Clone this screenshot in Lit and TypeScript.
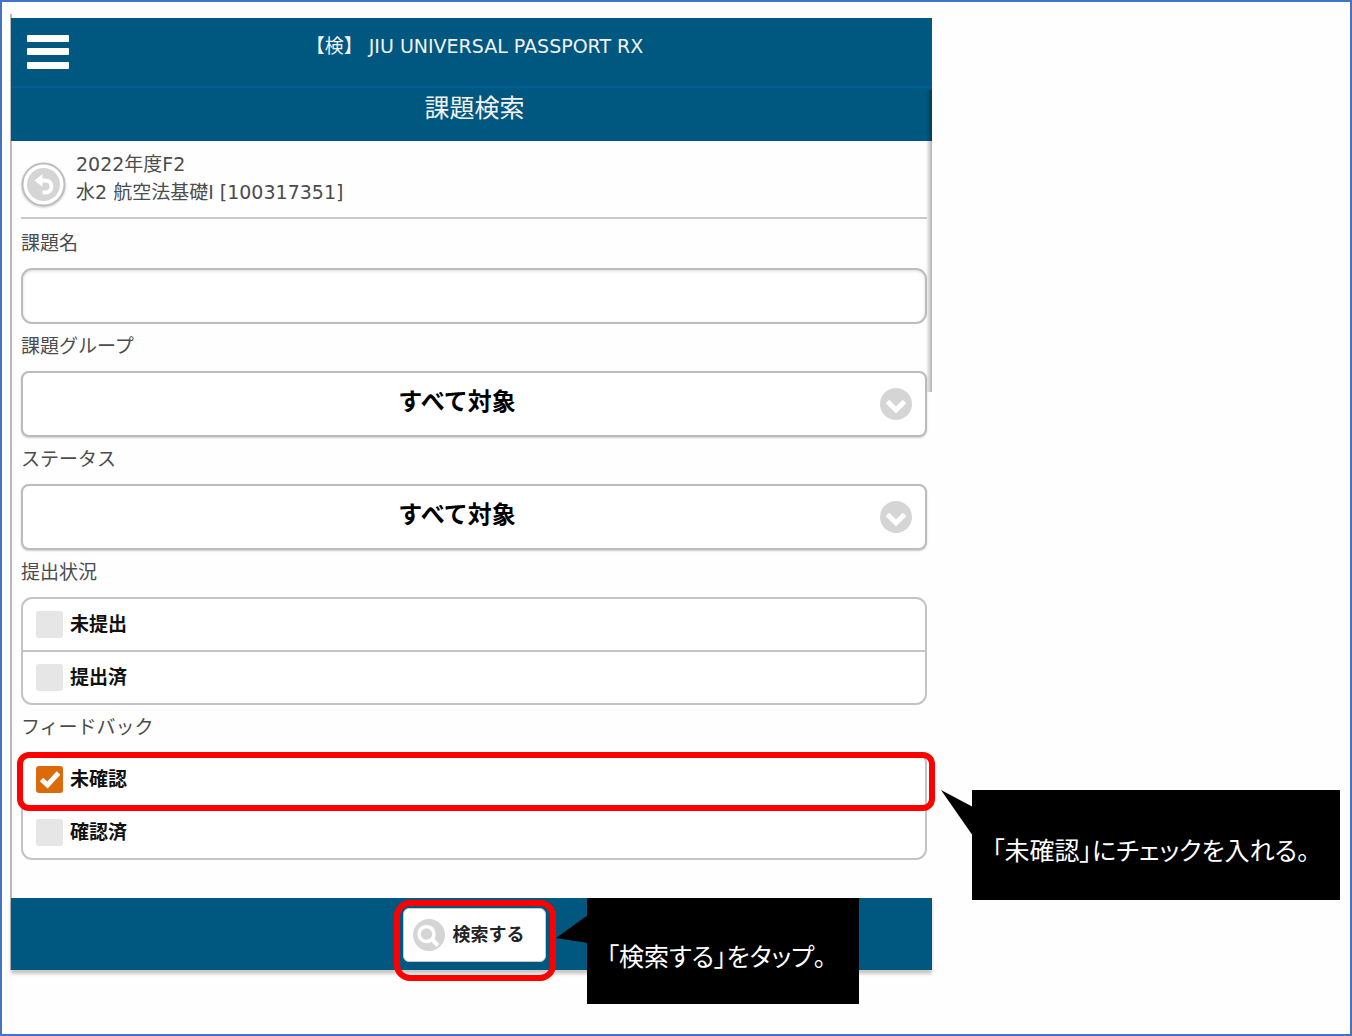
import { LitElement, html, css, svg } from "lit";
import { customElement, property, state } from "lit/decorators.js";

interface Choice {
  id: string;
  label: string;
  checked: boolean;
  note?: string;
}

const chevron = svg`
  <circle cx="16" cy="16" r="16" fill="#d5d5d5"></circle>
  <path d="M7.5 13.5 16 22l8.5-8.5" fill="none" stroke="#fff" stroke-width="5"></path>`;

@customElement("call-out")
export class CallOut extends LitElement {
  @property() tail: "up" | "side" = "up";

  static styles = css`
    :host {
      display: block;
      color: #fff;
    }
    .box {
      position: relative;
      display: flex;
      align-items: center;
      box-sizing: border-box;
      height: 100%;
      padding: 14px 16px 0 20px;
      background: #000;
      font-size: 25px;
      line-height: 36px;
      font-feature-settings: "palt";
      white-space: nowrap;
    }
    .tail {
      position: absolute;
      right: 100%;
      top: 0;
      width: 32px;
      height: 46px;
      margin-right: -1px;
      fill: #000;
    }
  `;

  render() {
    const points = this.tail === "up" ? "0,0 32,17 32,46" : "0,40 32,17 32,45";
    return html`<div class="box">
      <svg class="tail" viewBox="0 0 32 46" aria-hidden="true"><polygon points=${points}></polygon></svg>
      <slot></slot>
    </div>`;
  }
}

@customElement("app-root")
export class AppRoot extends LitElement {
  @state() private submission: Choice[] = [
    { id: "not-submitted", label: "未提出", checked: false },
    { id: "submitted", label: "提出済", checked: false },
  ];

  @state() private feedback: Choice[] = [
    { id: "unread", label: "未確認", checked: true, note: "「未確認」にチェックを入れる。" },
    { id: "read", label: "確認済", checked: false },
  ];

  static styles = css`
    :host {
      display: block;
      font-family: "DejaVu Sans", "Noto Sans CJK JP", sans-serif;
      font-size: 19px;
      color: #4c4c4c;
    }
    .page {
      box-sizing: border-box;
      min-height: 100vh;
      display: grid;
      grid-template-columns: minmax(0, 1fr) 408px;
      align-items: start;
      padding: 12px 10px 48px 8px;
      border: 2px solid #4472c4;
      background: #fefefe;
    }
    .panel {
      position: relative;
      padding-top: 4px;
      border-left: 2px solid #b9b9b9;
    }
    .edge {
      position: absolute;
      right: 0;
      top: 76px;
      width: 6px;
      height: 302px;
      background: linear-gradient(to right, rgba(0, 0, 0, 0), rgba(0, 0, 0, 0.3));
      pointer-events: none;
    }
    header,
    footer {
      margin-left: -1px;
      background: #005780;
      color: #f2f2f2;
    }
    .bar {
      display: grid;
      grid-template-columns: 42px minmax(0, 1fr) 42px;
      align-items: start;
      height: 68px;
      padding: 0 10px 0 16px;
    }
    .menu {
      height: 34px;
      margin: 17px 0 0;
      padding: 0;
      border: 0;
      background: none;
    }
    .menu svg {
      display: block;
      width: 42px;
      height: 34px;
    }
    .brand {
      margin: 14px 0 0;
      font-size: 19px;
      font-weight: 400;
      line-height: 28px;
      text-align: center;
    }
    .title {
      height: 55px;
      box-sizing: border-box;
      margin: 0;
      padding: 3px 0 0 6px;
      border-top: 2px solid #005f90;
      font-size: 25px;
      font-weight: 400;
      line-height: 36px;
      text-align: center;
    }
    .content {
      padding: 0 5px 38px 9px;
    }
    .course {
      display: flex;
      gap: 10px;
      height: 76px;
      margin-bottom: 2px;
      border-bottom: 2px solid #c9c9c9;
    }
    .back {
      flex: none;
      width: 45px;
      height: 45px;
      margin-top: 21px;
      padding: 0;
      border: 0;
      border-radius: 50%;
      background: none;
    }
    .back svg {
      display: block;
      width: 45px;
      height: 45px;
      filter: drop-shadow(0 1px 1px rgba(0, 0, 0, 0.2));
    }
    .course p {
      margin: 9px 0 0;
      line-height: 28px;
    }
    .caption {
      display: block;
      padding: 0 0 3px;
      line-height: 44px;
    }
    .text,
    .select {
      display: block;
      box-sizing: border-box;
      width: 100%;
      border: 2px solid #bcbcbc;
      background: #fff;
      font: inherit;
    }
    .text {
      height: 56px;
      padding: 0 12px;
      border-radius: 11px;
      box-shadow: inset 0 1px 3px rgba(0, 0, 0, 0.15);
    }
    .picker {
      position: relative;
    }
    .select {
      appearance: none;
      height: 66px;
      padding: 0 46px 4px 12px;
      border-radius: 8px;
      box-shadow: 0 1px 2px rgba(0, 0, 0, 0.2);
      color: #000;
      font-size: 24px;
      font-weight: 700;
      text-align: center;
      text-align-last: center;
    }
    .picker svg {
      position: absolute;
      right: 15px;
      top: 17px;
      width: 32px;
      height: 32px;
      pointer-events: none;
    }
    fieldset {
      min-width: 0;
      margin: 0;
      padding: 0;
      border: 0;
    }
    .group {
      border: 2px solid #c4c4c4;
      border-radius: 11px;
      background: #fff;
    }
    .row {
      position: relative;
      display: flex;
      align-items: center;
      gap: 7px;
      height: 51px;
      padding-left: 13px;
    }
    .row + .row {
      border-top: 2px solid #c4c4c4;
    }
    .tick {
      display: grid;
    }
    .tick > * {
      grid-area: 1 / 1;
      width: 27px;
      height: 27px;
      margin: 0;
    }
    .tick input {
      appearance: none;
      border-radius: 3px;
      background: #e6e6e6;
    }
    .tick input:checked {
      background: #dc6a0a;
    }
    .tick svg {
      visibility: hidden;
      pointer-events: none;
    }
    .tick input:checked + svg {
      visibility: visible;
    }
    .row label {
      color: #111;
      font-weight: 700;
      line-height: 28px;
      padding-bottom: 2px;
    }
    .ring {
      position: absolute;
      border: 6px solid #f00;
      pointer-events: none;
    }
    .ring-row {
      inset: -2px -10px -6px -6px;
      border-radius: 12px;
      z-index: 1;
    }
    .note-row {
      position: absolute;
      left: 100%;
      top: 36px;
      width: 368px;
      height: 110px;
      margin-left: 47px;
    }
    footer {
      display: flex;
      justify-content: center;
      padding: 10px 0 8px 5px;
      box-shadow: 0 4px 3px rgba(60, 40, 40, 0.25);
    }
    .action {
      position: relative;
    }
    .search {
      display: flex;
      align-items: center;
      gap: 8px;
      height: 54px;
      padding: 0 20px 0 9px;
      border: 1px solid #c8c8c8;
      border-radius: 6px;
      background: #fff;
      color: #222;
      font: inherit;
      font-size: 18px;
      font-weight: 700;
      line-height: 28px;
    }
    .search svg {
      width: 32px;
      height: 32px;
    }
    .ring-search {
      inset: -8px -10px -19px -9px;
      border-radius: 16px;
    }
    .note-search {
      position: absolute;
      left: 100%;
      top: -10px;
      width: 272px;
      height: 106px;
      margin-left: 41px;
    }
  `;

  private toggle(list: "submission" | "feedback", id: string) {
    this[list] = this[list].map((c) => (c.id === id ? { ...c, checked: !c.checked } : c));
  }

  private picker(id: string, label: string) {
    return html`
      <label class="caption" for=${id}>${label}</label>
      <div class="picker">
        <select class="select" id=${id}>
          <option>すべて対象</option>
        </select>
        <svg viewBox="0 0 32 32" aria-hidden="true">${chevron}</svg>
      </div>
    `;
  }

  private choices(list: "submission" | "feedback", caption: string) {
    return html`
      <fieldset>
        <legend class="caption">${caption}</legend>
        <div class="group">
          ${this[list].map(
            (c) => html`
              <div class="row">
                <span class="tick">
                  <input type="checkbox" id=${c.id} .checked=${c.checked} @change=${() => this.toggle(list, c.id)} />
                  <svg viewBox="0 0 27 27" aria-hidden="true">
                    <path d="M5.500 13.500l6 5.500L22.500 7" fill="none" stroke="#fff" stroke-width="5"></path>
                  </svg>
                </span>
                <label for=${c.id}>${c.label}</label>
                ${c.note
                  ? html`<div class="ring ring-row"></div>
                      <call-out class="note-row" tail="up">${c.note}</call-out>`
                  : null}
              </div>
            `,
          )}
        </div>
      </fieldset>
    `;
  }

  render() {
    return html`
      <div class="page">
        <main class="panel">
          <header>
            <div class="bar">
              <button class="menu" type="button" aria-label="メニュー">
                <svg viewBox="0 0 42 34" fill="#fff" aria-hidden="true">
                  <rect width="42" height="7" rx="1"></rect>
                  <rect y="13" width="42" height="7" rx="1"></rect>
                  <rect y="27" width="42" height="7" rx="1"></rect>
                </svg>
              </button>
              <h1 class="brand">【検】 JIU UNIVERSAL PASSPORT RX</h1>
            </div>
            <h2 class="title">課題検索</h2>
          </header>
          <div class="content">
            <div class="course">
              <button class="back" type="button" aria-label="戻る">
                <svg viewBox="0 0 45 45" aria-hidden="true">
                  <circle cx="22.5" cy="22.5" r="21" fill="#fff" stroke="#bdbdbd" stroke-width="2"></circle>
                  <circle cx="22.5" cy="22.5" r="16.5" fill="#d5d5d5"></circle>
                  <path d="M13.500 18.500l8-6.500v13z" fill="#fff"></path>
                  <path d="M19 18.500h5.500a6 6 0 0 1 0 12h-3" fill="none" stroke="#fff" stroke-width="4"></path>
                </svg>
              </button>
              <p>2022年度F2<br />水2 航空法基礎I [100317351]</p>
            </div>
            <label class="caption" for="name">課題名</label>
            <input class="text" id="name" type="text" />
            ${this.picker("group", "課題グループ")} ${this.picker("status", "ステータス")}
            ${this.choices("submission", "提出状況")} ${this.choices("feedback", "フィードバック")}
          </div>
          <footer>
            <div class="action">
              <button class="search" type="button">
                <svg viewBox="0 0 32 32" aria-hidden="true">
                  <circle cx="16" cy="16" r="16" fill="#d5d5d5"></circle>
                  <circle cx="13.500" cy="15" r="7.500" fill="none" stroke="#fff" stroke-width="3.500"></circle>
                  <path d="M18.500 20l6.500 6.500" stroke="#fff" stroke-width="4"></path>
                </svg>
                検索する
              </button>
              <div class="ring ring-search"></div>
              <call-out class="note-search" tail="side">「検索する」をタップ。</call-out>
            </div>
          </footer>
          <div class="edge"></div>
        </main>
      </div>
    `;
  }
}
